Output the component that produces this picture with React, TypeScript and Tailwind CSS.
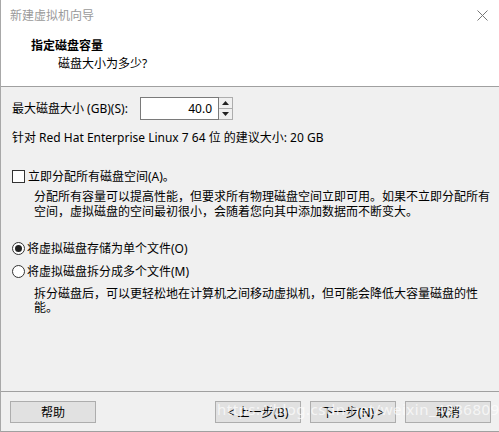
import React from 'react';

const font = { fontFamily: '"Segoe UI", "Noto Sans", "Noto Sans CJK SC", sans-serif' };

function Button({ label, className = '' }: { label: React.ReactNode; className?: string }) {
  return (
    <div
      className={`flex h-[22px] w-[86px] items-center justify-center border border-[#adadad] bg-[#e1e1e1] text-[12px] text-black ${className}`}
    >
      {label}
    </div>
  );
}

export default function App() {
  return (
    <div
      className="relative flex h-[432px] w-[499px] flex-col border-l border-[#a8a8a8] bg-[#f0f0f0] text-[12px] leading-[15px] text-black"
      style={font}
    >
      {/* title bar */}
      <div className="flex h-[30px] items-center justify-between bg-white pl-[9px] pr-[10px]">
        <span className="text-[12px] text-[#9a9a9a]">新建虚拟机向导</span>
        <svg width="11" height="11" viewBox="0 0 11 11" className="mr-[1px]">
          <path d="M0.5 0.5 L10.5 10.5 M10.5 0.5 L0.5 10.5" stroke="#777" strokeWidth="1" />
        </svg>
      </div>

      {/* header */}
      <div className="h-[57px] border-b border-[#a0a0a0] bg-white pl-[30px] pt-[8px]">
        <div className="font-bold leading-[15px]">指定磁盘容量</div>
        <div className="mt-[3px] pl-[27px] leading-[15px]">磁盘大小为多少?</div>
      </div>

      {/* body */}
      <div className="flex flex-1 flex-col pl-[11px]">
        <div className="mt-[10px] flex h-[23px] items-center">
          <span className="w-[128px]">最大磁盘大小 (GB)(S):</span>
          <div className="flex h-[23px] items-stretch">
            <div className="flex w-[79px] items-center justify-end border border-[#7a7a7a] bg-white pr-[6px]">40.0</div>
            <div className="flex w-[14px] flex-col border-y border-r border-[#adadad] bg-[#f0f0f0]">
              <div className="flex flex-1 items-center justify-center border-b border-[#adadad]">
                <svg width="7" height="4" viewBox="0 0 7 4">
                  <path d="M0 4 L3.5 0 L7 4 Z" fill="#222" />
                </svg>
              </div>
              <div className="flex flex-1 items-center justify-center">
                <svg width="7" height="4" viewBox="0 0 7 4">
                  <path d="M0 0 L3.5 4 L7 0 Z" fill="#222" />
                </svg>
              </div>
            </div>
          </div>
        </div>

        <div className="mt-[10px]">针对 Red Hat Enterprise Linux 7 64 位 的建议大小: 20 GB</div>

        <div className="mt-[23px] flex h-[16px] items-center gap-[3px]">
          <div className="h-[13px] w-[13px] border border-[#333] bg-white" />
          <span>立即分配所有磁盘空间(A)。</span>
        </div>
        <div className="mt-[5px] pl-[22px] pr-[8px]">
          <div>分配所有容量可以提高性能，但要求所有物理磁盘空间立即可用。如果不立即分配所有</div>
          <div>空间，虚拟磁盘的空间最初很小，会随着您向其中添加数据而不断变大。</div>
        </div>

        <div className="mt-[21px] flex h-[16px] items-center gap-[2px]">
          <div className="flex h-[13px] w-[13px] items-center justify-center rounded-full border border-[#333] bg-white">
            <div className="h-[7px] w-[7px] rounded-full bg-[#222]" />
          </div>
          <span>将虚拟磁盘存储为单个文件(O)</span>
        </div>
        <div className="mt-[7px] flex h-[16px] items-center gap-[2px]">
          <div className="h-[13px] w-[13px] rounded-full border border-[#333] bg-white" />
          <span>将虚拟磁盘拆分成多个文件(M)</span>
        </div>
        <div className="mt-[8px] pl-[22px] leading-[14px]">
          <div>拆分磁盘后，可以更轻松地在计算机之间移动虚拟机，但可能会降低大容量磁盘的性</div>
          <div>能。</div>
        </div>
      </div>

      {/* footer */}
      <div className="flex h-[41px] items-start border-y border-[#a0a0a0] pl-[9px] pt-[9px]">
        <Button label="帮助" />
        <Button label="< 上一步(B)" className="ml-[119px]" />
        <Button label="下一步(N) >" className="ml-[9px]" />
        <Button label="取消" className="ml-[9px]" />
      </div>

      <div className="pointer-events-none absolute left-[216px] top-[402px] text-[15px] tracking-[0.5px] text-white/70">
        https://blog.csdn.net/weixin_42368092
      </div>
    </div>
  );
}
